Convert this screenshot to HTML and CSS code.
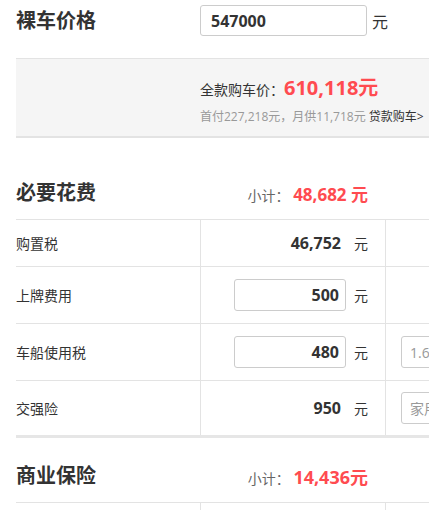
FILE: index.html
```html
<!DOCTYPE html>
<html lang="zh-CN">
<head>
    <meta charset="UTF-8">
    <title>购车计算器</title>
    <meta name="viewport" content="width=device-width, initial-scale=1.0">
    <link rel="stylesheet" href="styles.css">
</head>
<body>
    <div class="calc">
        <div class="price-row">
            <h2 class="title">裸车价格</h2>
            <div class="price-field">
                <input type="text" class="price-input" value="547000">
                <span class="unit-big">元</span>
            </div>
        </div>

        <div class="summary">
            <div class="summary-total">全款购车价：<span class="total-num">610,118元</span></div>
            <div class="summary-loan">首付227,218元，月供11,718元 <a href="#" class="loan-link">贷款购车&gt;</a></div>
        </div>

        <div class="section-head first">
            <h2 class="title">必要花费</h2>
            <div class="subtotal">小计： <span class="subtotal-num">48,682 元</span></div>
        </div>

        <div class="table">
            <div class="row r1">
                <div class="cell name">购置税</div>
                <div class="cell val"><span class="num">46,752</span><span class="unit">元</span></div>
                <div class="cell opt"></div>
            </div>
            <div class="row r2">
                <div class="cell name">上牌费用</div>
                <div class="cell val"><input type="text" class="small-input" value="500"><span class="unit">元</span></div>
                <div class="cell opt"></div>
            </div>
            <div class="row r3">
                <div class="cell name">车船使用税</div>
                <div class="cell val"><input type="text" class="small-input" value="480"><span class="unit">元</span></div>
                <div class="cell opt"><select class="opt-select"><option>1.6-2.0L(含)</option></select></div>
            </div>
            <div class="row r4">
                <div class="cell name">交强险</div>
                <div class="cell val"><span class="num">950</span><span class="unit">元</span></div>
                <div class="cell opt"><select class="opt-select"><option>家用6座以下</option></select></div>
            </div>
        </div>

        <div class="section-head second">
            <h2 class="title">商业保险</h2>
            <div class="subtotal">小计： <span class="subtotal-num big">14,436元</span></div>
        </div>

        <div class="table">
            <div class="row r1">
                <div class="cell name"></div>
                <div class="cell val"></div>
                <div class="cell opt"></div>
            </div>
        </div>
    </div>
</body>
</html>
```

FILE: styles.css
```css
html, body {
    margin: 0;
    overflow: hidden;
}

body {
    font-family: "Open Sans", "Noto Sans CJK SC", sans-serif;
    color: #333;
    background: white;
}

.calc {
    width: 640px;
    margin-left: 16px;
}

.title {
    margin: 0;
    font-size: 20px;
    font-weight: bold;
    color: #333;
    line-height: 28px;
}

.price-row {
    display: grid;
    grid-template-columns: 184px 1fr;
    align-items: center;
    padding-top: 5px;
    height: 31px;
    margin-bottom: 22px;
}

.price-field {
    display: flex;
    align-items: center;
}

.price-input {
    width: 167px;
    height: 31px;
    box-sizing: border-box;
    border: 1px solid #ccc;
    border-radius: 3px;
    padding: 0 10px;
    font-family: inherit;
    font-size: 16px;
    font-weight: bold;
    color: #333;
}

.unit-big {
    font-size: 16px;
    margin-left: 5px;
}

.summary {
    background: #f5f5f5;
    border-top: 1px solid #e3e3e3;
    border-bottom: 2px solid #e3e3e3;
    height: 77px;
    padding-left: 184px;
    box-sizing: content-box;
}

.summary-total {
    padding-top: 15px;
    font-size: 14px;
    line-height: 28px;
    color: #333;
}

.total-num {
    font-size: 20px;
    font-weight: bold;
    color: #ff4b50;
}

.summary-loan {
    font-size: 12px;
    color: #999;
    line-height: 18px;
    margin-top: 4px;
}

.loan-link {
    color: #333;
    text-decoration: none;
}

.section-head {
    display: grid;
    grid-template-columns: 184px 185px;
    align-items: center;
    box-sizing: border-box;
}

.section-head.first {
    height: 81px;
    padding-top: 29px;
}

.section-head.second {
    height: 64px;
    padding-top: 12px;
}

.subtotal {
    text-align: right;
    padding-right: 17px;
    font-size: 14px;
    color: #666;
}

.subtotal-num {
    font-size: 17px;
    font-weight: bold;
    color: #ff4b50;
}

.subtotal-num.big {
    font-size: 18px;
}

.table {
    border-top: 1px solid #e3e3e3;
}

.row {
    display: grid;
    grid-template-columns: 184px 185px 1fr;
    border-bottom: 1px solid #e3e3e3;
}

.row.r1 { height: 46px; }
.row.r2 { height: 56px; }
.row.r3 { height: 56px; }
.row.r4 {
    height: 54px;
    border-bottom: 3px solid #e6e6e6;
}

.cell {
    display: flex;
    align-items: center;
    font-size: 14px;
}

.val {
    justify-content: flex-end;
    padding-right: 17px;
    border-left: 1px solid #e3e3e3;
}

.opt {
    border-left: 1px solid #e3e3e3;
    padding-left: 15px;
}

.num {
    font-size: 16px;
    font-weight: bold;
    margin-right: 13px;
}

.unit {
    font-size: 14px;
}

.small-input {
    width: 112px;
    height: 32px;
    box-sizing: border-box;
    border: 1px solid #ccc;
    border-radius: 3px;
    padding: 0 6px;
    text-align: right;
    font-family: inherit;
    font-size: 16px;
    font-weight: bold;
    color: #333;
    margin-right: 8px;
}

.opt-select {
    width: 160px;
    height: 32px;
    border: 1px solid #ccc;
    border-radius: 3px;
    background: white;
    padding: 0 8px;
    font-family: inherit;
    font-size: 14px;
    color: #999;
    appearance: none;
}
```
